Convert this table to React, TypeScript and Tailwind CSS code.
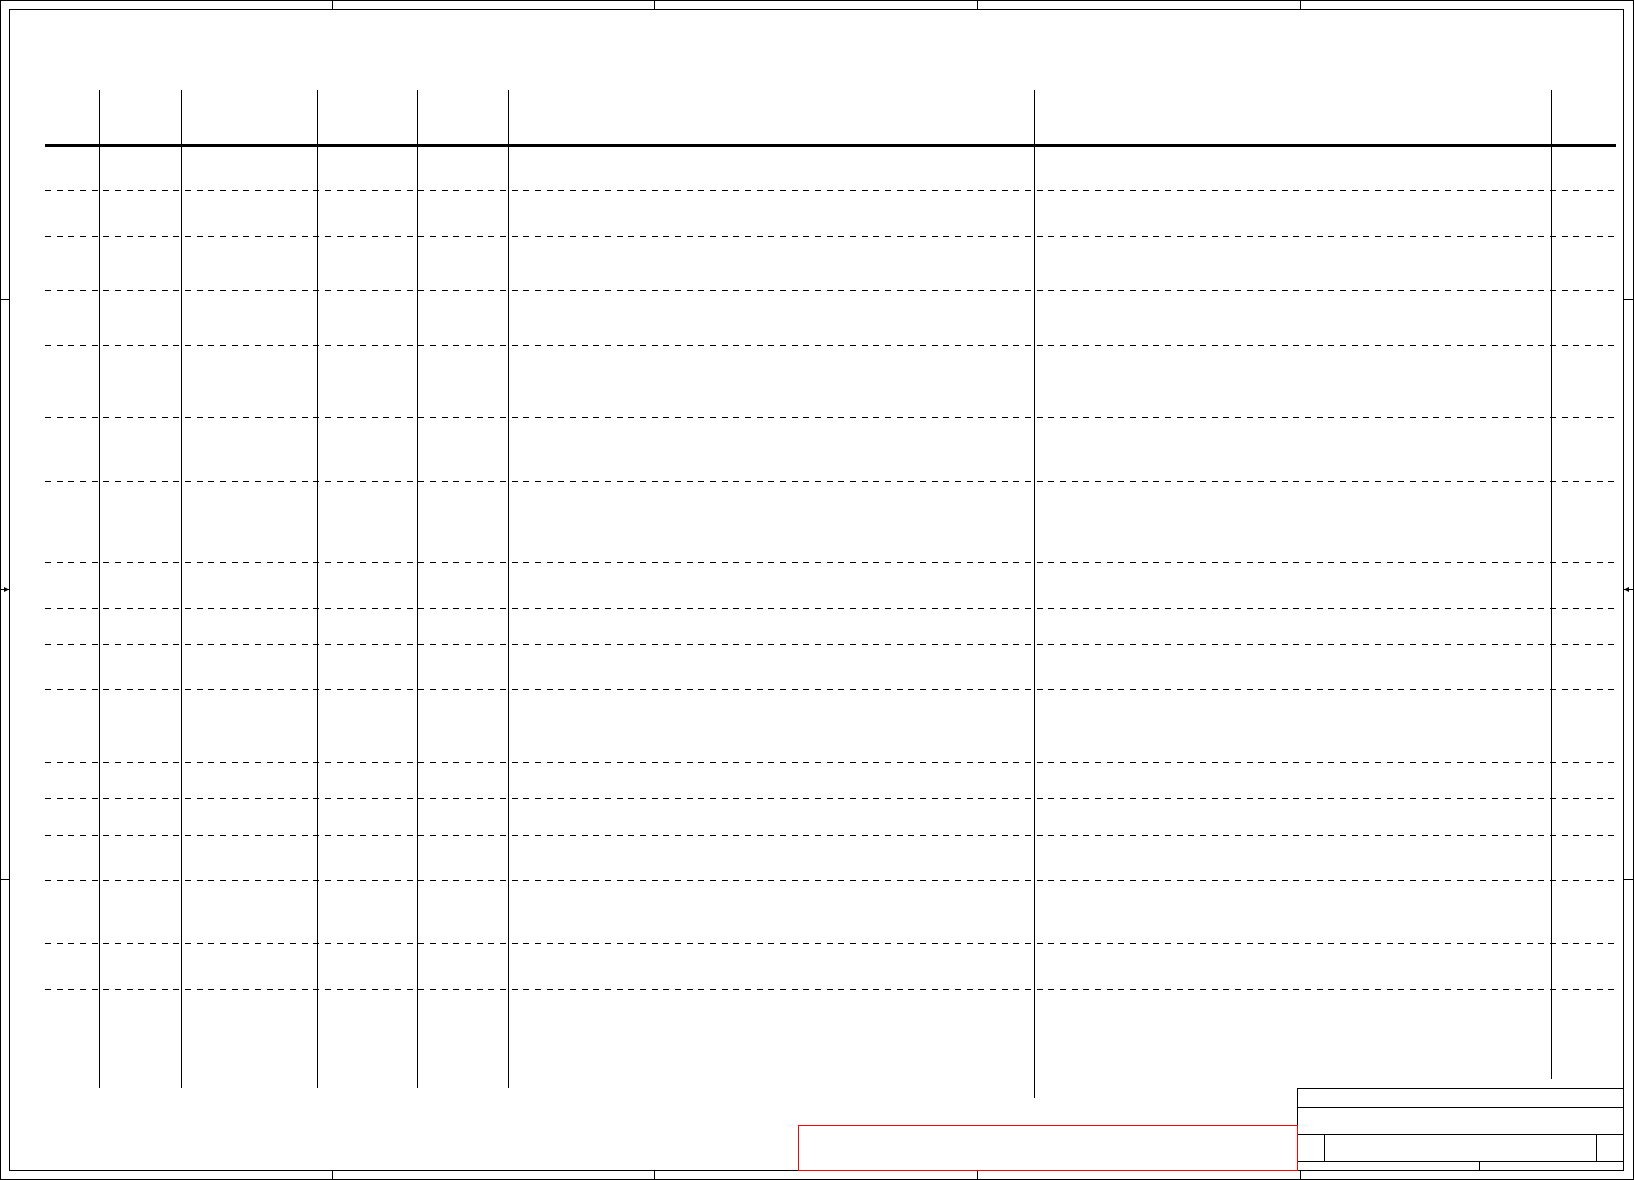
import React from 'react';

// dashed rule used for the table rows (6px on / ~5.7px off)
const Dash = () => (
    <div className="h-px w-full bg-[repeating-linear-gradient(90deg,#000_0_6px,transparent_6px_11.667px)]" />
);

// heights between successive row rules, top to bottom
const rows = [
    'h-[44px]', 'h-[46px]', 'h-[54px]', 'h-[55px]', 'h-[72px]', 'h-[64px]', 'h-[81px]', 'h-[46px]',
    'h-[36px]', 'h-[45px]', 'h-[73px]', 'h-[36px]', 'h-[37px]', 'h-[45px]', 'h-[63px]', 'h-[46px]',
];

// column separators: width up to the next separator, and how far down the line runs
const columns = [
    'w-[82px] h-[998px]',
    'w-[136px] h-[998px]',
    'w-[100px] h-[998px]',
    'w-[91px] h-[998px]',
    'w-[526px] h-[998px]',
    'w-[517px] h-[1008px]',
    'w-px h-[989px]',
];

const ZoneStrip = () => (
    <div className="flex h-full">
        <div className="w-[323px]" />
        <div className="w-[322px] border-l border-black" />
        <div className="w-[323px] border-l border-black" />
        <div className="w-[323px] border-l border-black" />
        <div className="flex-1 border-l border-black" />
    </div>
);

const SideStrip = ({ side }: { side: 'left' | 'right' }) => (
    <div className="flex h-full flex-col">
        <div className="h-[290px]" />
        <div className="h-[290px] border-t border-black" />
        <div className={`flex h-px bg-black ${side === 'left' ? 'justify-end' : 'justify-start'}`}>
            <svg width="5" height="5" viewBox="0 0 5 5" className="-mt-[2px] shrink-0">
                {side === 'left' ? (
                    <polygon points="0,0 5,2.5 0,5" fill="#000" />
                ) : (
                    <polygon points="5,0 0,2.5 5,5" fill="#000" />
                )}
            </svg>
        </div>
        <div className="h-[289px]" />
        <div className="flex-1 border-t border-black" />
    </div>
);

const TitleBlock = () => (
    <div className="flex h-[83px] w-[327px] flex-col border border-black">
        <div className="h-[18px]" />
        <div className="h-[27px] border-t border-black" />
        <div className="flex h-[27px] border-t border-black">
            <div className="w-[26px]" />
            <div className="flex-1 border-l border-black" />
            <div className="w-[27px] border-l border-black" />
        </div>
        <div className="flex flex-1 border-t border-black">
            <div className="w-[181px]" />
            <div className="flex-1 border-l border-black" />
        </div>
    </div>
);

export default function App() {
    return (
        <div className="grid h-[1180px] w-[1634px] grid-cols-[8px_1615px_9px] grid-rows-[8px_1162px_8px] border border-black bg-white font-['Liberation_Sans',sans-serif]">
            {/* margin zone marks */}
            <div className="col-start-2 row-start-1">
                <ZoneStrip />
            </div>
            <div className="col-start-1 row-start-2">
                <SideStrip side="left" />
            </div>
            <div className="col-start-3 row-start-2">
                <SideStrip side="right" />
            </div>
            <div className="col-start-2 row-start-3">
                <ZoneStrip />
            </div>

            {/* drawing frame */}
            <div className="col-start-2 row-start-2 grid border border-black">
                {/* table */}
                <div className="col-start-1 row-start-1 grid self-start pl-[35px] pt-[80px]">
                    <div className="col-start-1 row-start-1 flex w-[1571px] flex-col">
                        <div className="h-[54px]" />
                        <div className="h-[3px] bg-black" />
                        {rows.map((h, i) => (
                            <div key={i} className={`flex flex-col justify-end ${h}`}>
                                <Dash />
                            </div>
                        ))}
                    </div>
                    <div className="col-start-1 row-start-1 flex items-start">
                        <div className="w-[54px]" />
                        {columns.map((c, i) => (
                            <div key={i} className={`border-l border-black ${c}`} />
                        ))}
                    </div>
                </div>

                {/* red stamp box + title block */}
                <div className="col-start-1 row-start-1 -mb-px -mr-px flex items-end self-end justify-self-end">
                    <div className="relative z-10 -mr-px h-[46px] w-[500px] border border-[#ff0000]" />
                    <TitleBlock />
                </div>
            </div>
        </div>
    );
}
